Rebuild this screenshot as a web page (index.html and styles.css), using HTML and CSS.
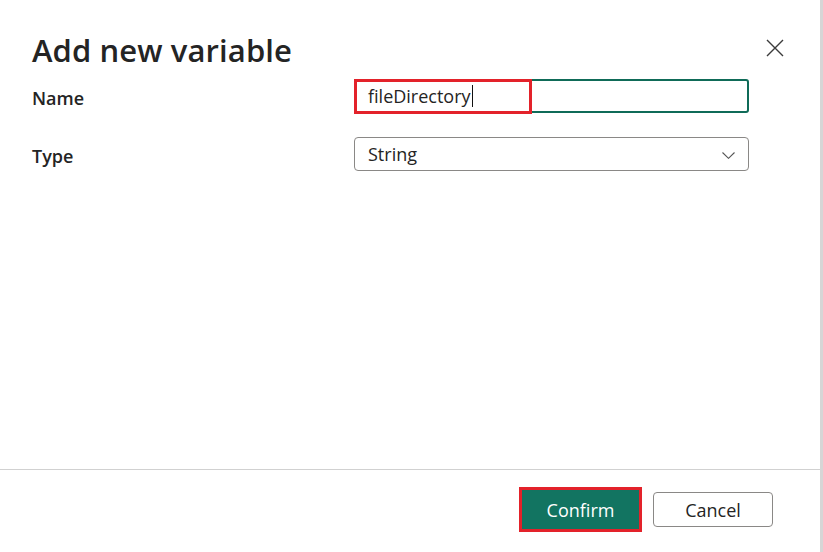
FILE: index.html
```html
<!DOCTYPE html>
<html lang="en">
<head>
<meta charset="utf-8">
<title>Add new variable</title>
<link rel="stylesheet" href="styles.css">
</head>
<body>
<div class="page">
  <div class="dialog">
    <div class="header">
      <h1 class="title">Add new variable</h1>
      <button class="close" aria-label="Close">
        <svg width="18" height="18" viewBox="0 0 18 18"><path d="M1 1 L17 17 M17 1 L1 17" stroke="#3b3b3b" stroke-width="1.4" fill="none"/></svg>
      </button>
    </div>
    <div class="form">
      <label class="label">Name</label>
      <div class="field input focused">
        <span class="value">fileDirectory</span><span class="caret"></span>
        <span class="highlight"></span>
      </div>
      <label class="label">Type</label>
      <div class="field select">
        <span class="value">String</span>
        <svg class="chev" width="13" height="7" viewBox="0 0 13 7"><path d="M0.5 0.5 L6.5 6.3 L12.5 0.5" stroke="#555" stroke-width="1.1" fill="none"/></svg>
      </div>
    </div>
    <div class="spacer"></div>
    <div class="footer">
      <button class="btn primary">Confirm</button>
      <button class="btn secondary">Cancel</button>
    </div>
  </div>
  <div class="scroll"></div>
</div>
</body>
</html>
```
FILE: styles.css
```css
html, body {
  margin: 0;
  padding: 0;
  background: #ffffff;
}
body {
  font-family: "Open Sans", "Noto Sans", sans-serif;
  color: #242424;
}
.page {
  display: flex;
  width: 823px;
  height: 552px;
}
.dialog {
  width: 820px;
  display: flex;
  flex-direction: column;
}
.scroll {
  width: 3px;
  background: #d6d6d6;
}
.header {
  display: flex;
  justify-content: space-between;
  align-items: flex-start;
  padding: 30px 36px 0 32px;
}
.title {
  margin: 0;
  font-size: 31px;
  font-weight: 600;
  line-height: 40px;
  color: #242424;
  letter-spacing: 0.1px;
}
.close {
  margin-top: 9px;
  padding: 0;
  border: 0;
  background: none;
  width: 18px;
  height: 18px;
  display: block;
}
.close svg { display: block; }
.form {
  display: grid;
  grid-template-columns: 322px 395px;
  row-gap: 24px;
  margin: 9px 0 0 32px;
}
.label {
  align-self: center;
  font-size: 18px;
  font-weight: 600;
  line-height: 24px;
  padding-top: 4px;
}
.field {
  position: relative;
  box-sizing: border-box;
  height: 34px;
  display: flex;
  align-items: center;
  font-size: 18px;
}
.input {
  border: 2px solid #0f6b58;
  border-radius: 3px;
  padding-left: 12px;
}
.select {
  border: 1px solid #8a8886;
  border-radius: 4px;
  padding: 0 13px 0 13px;
  justify-content: space-between;
}
.value {
  line-height: 24px;
  color: #242424;
}
.caret {
  width: 1.5px;
  height: 22px;
  background: #111;
  margin-left: 1px;
}
.highlight {
  position: absolute;
  left: -2px;
  top: -2px;
  width: 178px;
  height: 35px;
  box-sizing: border-box;
  border: 3px solid #e3222a;
}
.chev { display: block; margin-top: 2px; }
.spacer { flex: 1; }
.footer {
  border-top: 1px solid #d1d1d1;
  display: flex;
  justify-content: flex-end;
  align-items: center;
  gap: 11px;
  padding: 17px 47px 20px 0;
}
.btn {
  font-family: "Open Sans", "Noto Sans", sans-serif;
  font-size: 18px;
  line-height: 24px;
  cursor: pointer;
}
.primary {
  box-sizing: border-box;
  width: 123px;
  height: 45px;
  background: #127461;
  color: #ffffff;
  font-weight: 500;
  border: 3px solid #e3222a;
  padding: 0;
}
.secondary {
  box-sizing: border-box;
  width: 120px;
  height: 35px;
  background: #ffffff;
  color: #242424;
  border: 1px solid #8a8886;
  border-radius: 4px;
  padding: 0;
}
```
